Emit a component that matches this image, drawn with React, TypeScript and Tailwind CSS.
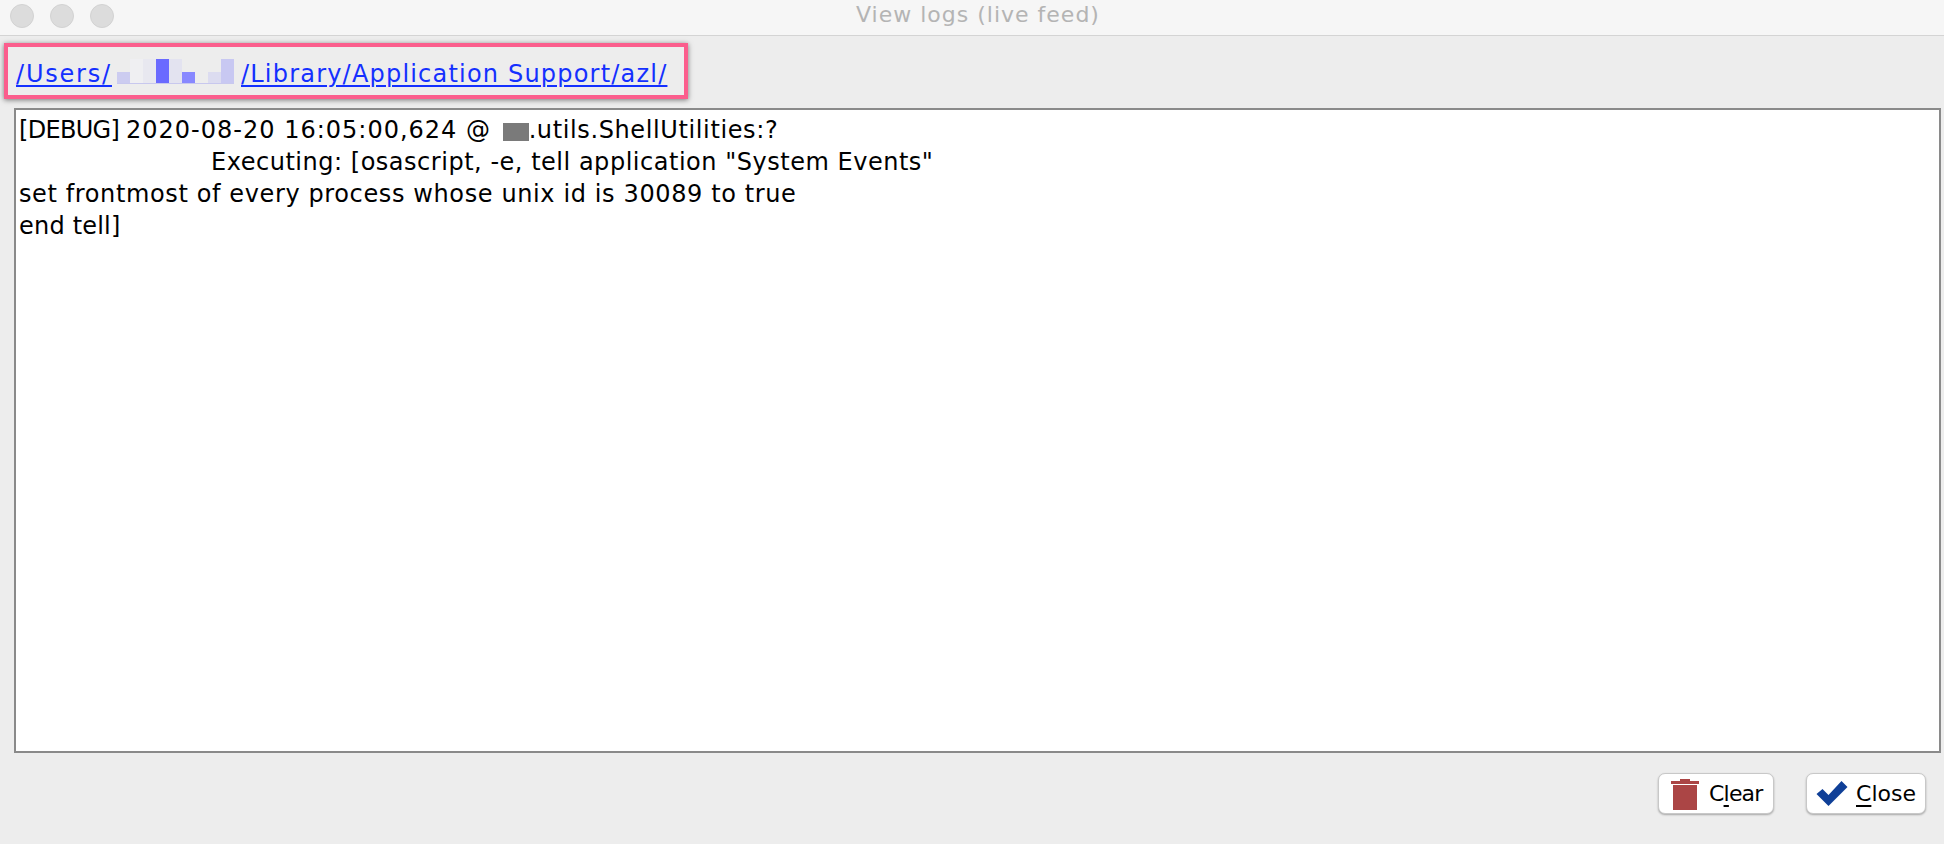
export default function App() {
  const font = "font-['DejaVu_Sans','Liberation_Sans',sans-serif]";
  return (
    <div className={`w-[1944px] h-[844px] bg-[#ededed] flex flex-col overflow-hidden ${font}`}>
      <div className="h-[36px] shrink-0 bg-[#f6f6f6] border-b border-[#d4d4d4] flex items-center pl-[10px] gap-[16px] pb-[3px]">
        <div className="w-[24px] h-[24px] rounded-full bg-[#dcdcdc] border border-[#d2d2d2]" />
        <div className="w-[24px] h-[24px] rounded-full bg-[#dcdcdc] border border-[#d2d2d2]" />
        <div className="w-[24px] h-[24px] rounded-full bg-[#dcdcdc] border border-[#d2d2d2]" />
        <div className="flex-1 text-center text-[22px] leading-[26px] tracking-[1px] text-[#b4b4b4] pr-[118px] pb-[3px]">View logs (live feed)</div>
      </div>
      <div className="pl-[4px] pt-[7px] pb-[9px] shrink-0">
        <div className="w-[684px] h-[56px] border-[4px] border-[#fb5e8d] shadow-[0_1px_5px_rgba(0,0,0,0.5)] flex items-end pl-[8px] pb-[7px]">
          <div className="text-[#1430ff] text-[24px] leading-[28px] underline decoration-2 underline-offset-[3px] tracking-[1.8px] w-[98px] whitespace-nowrap">/Users/</div>
          <div className="flex items-end ml-[3px] mb-[4px] h-[24px] w-[117px] border-b border-[#c8c8ee]">
            <div className="w-[13px] h-[11px] bg-[#ccccf0]" />
            <div className="w-[13px] h-[24px] bg-[#efeff2]" />
            <div className="w-[13px] h-[24px] bg-[#e8e8f0]" />
            <div className="w-[13px] h-[24px] bg-[#6a6aff]" />
            <div className="w-[13px] h-[24px] bg-[#e3e3f0]" />
            <div className="w-[13px] h-[11px] bg-[#8888ff]" />
            <div className="w-[13px] h-[11px]" />
            <div className="w-[13px] h-[11px] bg-[#dcdcf0]" />
            <div className="w-[13px] h-[24px] bg-[#c8c8f2]" />
          </div>
          <div className="text-[#1430ff] text-[24px] leading-[28px] underline decoration-2 underline-offset-[3px] tracking-[1.2px] ml-[7px] whitespace-nowrap">/Library/Application Support/azl/</div>
        </div>
      </div>
      <div className="ml-[14px] mr-[3px] h-[645px] shrink-0 bg-white border-2 border-[#8a8a8a] pl-[3px] pt-[4px] text-[24px] leading-[32px] text-black whitespace-pre">
        <div className="flex items-center tracking-[0.62px]">
          <span className="tracking-[-0.7px]">[DEBUG] </span>
          <span className="tracking-[1px]">2020-08-20 16:05:00,624 @ </span>
          <span className="inline-block ml-[3px] w-[26px] h-[18px] bg-[#7a7a7a] mt-[3px]" />
          <span>.utils.ShellUtilities:?</span>
        </div>
        <div className="pl-[192px] tracking-[0.52px]">Executing: [osascript, -e, tell application "System Events"</div>
        <div className="tracking-[0.62px]">set frontmost of every process whose unix id is 30089 to true</div>
        <div className="tracking-[0.2px]">end tell]</div>
      </div>
      <div className="flex justify-end gap-[32px] pr-[18px] pt-[20px]">
        <button className="w-[116px] h-[41px] bg-white rounded-[7px] border border-[#c8c8c8] shadow-[0_1px_2px_rgba(0,0,0,0.3)] flex items-center pl-[11px] gap-[9px] text-[22px] text-black">
          <svg width="30" height="33" viewBox="0 0 30 33" className="shrink-0">
            <path d="M1 4h28v3H1zM10 2h10v2H10zM3 8h24v25H3z" fill="#ab4545" />
          </svg>
          <span className="tracking-[-0.8px]">C<span className="underline underline-offset-4">l</span>ear</span>
        </button>
        <button className="w-[120px] h-[41px] bg-white rounded-[7px] border border-[#c8c8c8] shadow-[0_1px_2px_rgba(0,0,0,0.3)] flex items-center pl-[8px] gap-[7px] text-[22px] text-black">
          <svg width="34" height="27" viewBox="0 0 33 27" className="shrink-0">
            <path d="M1 14L7 9L13 15L26 1L32 7L13 26Z" fill="#0f3f97" />
          </svg>
          <span><span className="underline underline-offset-4">C</span>lose</span>
        </button>
      </div>
    </div>
  );
}
